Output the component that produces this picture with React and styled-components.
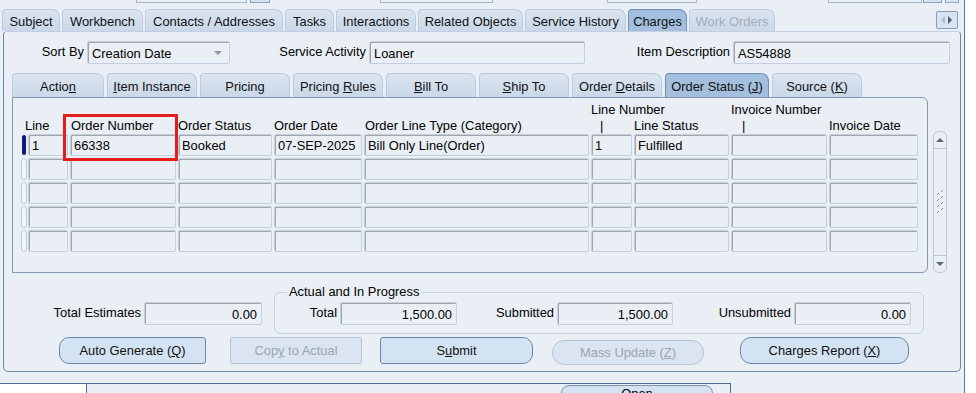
import styled, { createGlobalStyle } from "styled-components";

const GlobalStyle = createGlobalStyle`
  html, body { margin: 0; padding: 0; background: #fff; }
  body {
    font-family: "Liberation Sans", Arial, sans-serif;
    font-size: 12.9px;
    color: #000;
  }
`;

const Window = styled.div`
  width: 965px;
  height: 393px;
  box-sizing: border-box;
  background: #eaeff6;
  border-right: 1px solid #5f7899;
  overflow: hidden;
  display: flex;
  flex-direction: column;
  & > * { flex-shrink: 0; }
`;

const TopStrip = styled.div`
  height: 9px;
  display: flex;
  align-items: flex-start;
`;

const Stub = styled.div`
  margin-left: ${(p) => p.$ml}px;
  width: ${(p) => p.$w}px;
  height: 3px;
  box-sizing: border-box;
  border: 1px solid ${(p) => (p.$btn ? "#8fa3bd" : "#a9b6c6")};
  border-top: 0;
  background: ${(p) => (p.$btn ? "#d5e3f2" : "#eaeff6")};
`;

const TabBar = styled.div`
  height: 22px;
  display: flex;
  align-items: flex-end;
  gap: 2px;
  padding-left: 2px;
`;

const Tab = styled.div`
  width: ${(p) => p.$w}px;
  height: 22px;
  box-sizing: border-box;
  padding: 1px 0 0;
  display: flex;
  align-items: center;
  justify-content: center;
  white-space: pre;
  border: 1px solid ${(p) => (p.$active ? "#6f8fb6" : "#bccadc")};
  border-bottom: 0;
  border-radius: 4px 8px 0 0;
  background: ${(p) =>
    p.$active ? "#a3bfdd" : "linear-gradient(#dbe5f1, #c9d7e8)"};
  color: ${(p) => (p.$disabled ? "#a3acb8" : "#111")};
`;

const NavButton = styled.div`
  margin-left: auto;
  margin-right: 6px;
  align-self: center;
  width: 22px;
  height: 18px;
  box-sizing: border-box;
  border: 1px solid #8a9cb4;
  border-radius: 2px;
  background: #d5e3f2;
  display: flex;
  align-items: center;
  justify-content: center;
`;

const Panel = styled.div`
  margin-left: 3px;
  width: 958px;
  height: 341px;
  box-sizing: border-box;
  border: 1px solid #6e86a7;
  border-top-color: #c2cfe1;
  border-radius: 4px 4px 5px 5px;
  display: flex;
  flex-direction: column;
`;

const FieldRow = styled.div`
  margin-top: 9px;
  display: flex;
  align-items: center;
`;

const Field = styled.div`
  display: flex;
  align-items: center;
`;

const Label = styled.div`
  width: ${(p) => p.$w}px;
  margin-right: 3px;
  text-align: right;
  white-space: nowrap;
  padding-bottom: 3px;
`;

const Input = styled.div`
  width: ${(p) => p.$w}px;
  height: 23px;
  box-sizing: border-box;
  border: 1px solid #c1cfe2;
  box-shadow: inset 1px 1px 0 #a3a3a3;
  border-radius: 2px;
  background: #eaeff6;
  padding: 1px 4px 0 4px;
  display: flex;
  align-items: center;
  justify-content: ${(p) => (p.$right ? "flex-end" : "space-between")};
  white-space: pre;
`;

const DropArrow = styled.span`
  width: 0;
  height: 0;
  margin-right: 3px;
  border-left: 4px solid transparent;
  border-right: 4px solid transparent;
  border-top: 4px solid #8c96a3;
`;

const SubTabBar = styled.div`
  margin: 9px 0 0 8px;
  height: 24px;
  display: flex;
  gap: 3px;
`;

const SubTab = styled(Tab)`
  height: 24px;
`;

const U = styled.span`
  text-decoration: underline;
  text-underline-offset: 1px;
`;

const BodyRow = styled.div`
  margin-left: 8px;
  display: flex;
  align-items: flex-end;
  gap: 5px;
`;

const InnerPanel = styled.div`
  position: relative;
  width: 916px;
  height: 176px;
  box-sizing: border-box;
  border: 1px solid #8397b3;
  border-radius: 0 6px 6px 0;
  padding: 3px 0 0 8px;
`;

const cols = "7px 42px 108px 96px 90px 227px 43px 97px 98px 91px";

const HeadGrid = styled.div`
  display: grid;
  grid-template-columns: ${cols};
  grid-auto-rows: 16px;
  line-height: 16px;
  margin-bottom: 1px;
`;

const HeadCell = styled.div`
  grid-column: ${(p) => p.$col};
  grid-row: ${(p) => p.$row};
  padding-left: ${(p) => p.$pl || 0}px;
  padding-top: 1px;
  white-space: nowrap;
`;

const Row = styled.div`
  display: grid;
  grid-template-columns: ${cols};
  height: 22px;
  margin-bottom: 2px;
`;

const Cell = styled.div`
  height: 22px;
  margin-right: 2px;
  box-sizing: border-box;
  border: 1px solid #c1cfe2;
  box-shadow: inset 1px 1px 0 #a5a5a5;
  border-radius: 2px;
  padding: 1px 0 0 3px;
  display: flex;
  align-items: center;
  white-space: pre;
  overflow: hidden;
`;

const Indicator = styled.div`
  width: 6px;
  height: 22px;
  box-sizing: border-box;
  border: 1px solid ${(p) => (p.$current ? "#eaeff6" : "#bccbe0")};
  border-radius: 3px;
  background: ${(p) => (p.$current ? "#0b1a7c" : "#f1f5fa")};
`;

const Highlight = styled.div`
  position: absolute;
  left: 50px;
  top: 16px;
  width: 115px;
  height: 47px;
  box-sizing: border-box;
  border: 3px solid #e31c1c;
`;

const Scrollbar = styled.div`
  width: 14px;
  height: 142px;
  box-sizing: border-box;
  border: 1px solid #b7c6da;
  border-radius: 6px;
  display: flex;
  flex-direction: column;
`;

const ScrollArrow = styled.div`
  height: 16px;
  display: flex;
  align-items: center;
  justify-content: center;
  ${(p) => (p.$down ? "border-top" : "border-bottom")}: 1px solid #b7c6da;
`;

const Tri = styled.span`
  width: 0;
  height: 0;
  border-left: 4px solid transparent;
  border-right: 4px solid transparent;
  ${(p) => (p.$down ? "border-top" : "border-bottom")}: 4px solid #5d6776;
`;

const Track = styled.div`
  flex: 1;
  display: flex;
  align-items: center;
  justify-content: center;
`;

const TotalsRow = styled.div`
  margin-top: 19px;
  display: flex;
  align-items: flex-start;
`;

const Estimate = styled(Field)`
  margin-top: 10px;
`;

const Group = styled.div`
  position: relative;
  margin-left: 12px;
  width: 650px;
  height: 42px;
  box-sizing: border-box;
  border: 1px solid #c2d1e4;
  border-radius: 6px;
  padding-top: 9px;
  display: flex;
  align-items: flex-start;
`;

const Legend = styled.div`
  position: absolute;
  top: -8px;
  left: 12px;
  padding: 0 2px;
  background: #eaeff6;
  line-height: 14px;
`;

const ButtonRow = styled.div`
  margin-top: 3px;
  padding-left: 55px;
  display: flex;
  align-items: flex-start;
`;

const Button = styled.div`
  margin-left: ${(p) => p.$ml || 0}px;
  margin-top: ${(p) => p.$mt || 0}px;
  width: ${(p) => p.$w}px;
  height: ${(p) => p.$h || 27}px;
  box-sizing: border-box;
  border: 1px solid ${(p) => (p.$disabled ? "#b5c4d7" : "#6d87a9")};
  border-radius: ${(p) => p.$r};
  background: ${(p) => (p.$disabled ? "#dae5f1" : "#d4e3f3")};
  color: ${(p) => (p.$disabled ? "#99a4b2" : "#111")};
  display: flex;
  align-items: center;
  justify-content: center;
  white-space: pre;
`;

const Footer = styled.div`
  margin-top: 11px;
  width: 731px;
  height: 30px;
  display: flex;
  border-top: 1px solid #4d6a90;
`;

const WhiteBox = styled.div`
  width: 86px;
  background: #fff;
  border-right: 1px solid #4d6a90;
`;

const FooterArea = styled.div`
  flex: 1;
  border-right: 1px solid #4d6a90;
  display: flex;
  justify-content: flex-end;
  padding-right: 17px;
  padding-top: 1px;
`;

const OpenButton = styled.div`
  width: 152px;
  height: 24px;
  box-sizing: border-box;
  border: 1px solid #7d93b0;
  border-radius: 8px 8px 0 0;
  background: #d4e3f3;
  text-align: center;
  line-height: 14px;
  padding-top: 1px;
`;

const topTabs = [
  { w: 58, label: "Subject" },
  { w: 81, label: "Workbench" },
  { w: 138, label: "Contacts / Addresses" },
  { w: 49, label: "Tasks" },
  { w: 80, label: "Interactions" },
  { w: 105, label: "Related Objects" },
  { w: 101, label: "Service History" },
  { w: 59, label: "Charges", active: true },
  { w: 86, label: "Work Orders", disabled: true },
];

const subTabs = [
  { w: 92, label: <>Actio<U>n</U></> },
  { w: 90, label: <><U>I</U>tem Instance</> },
  { w: 90, label: "Pricing" },
  { w: 90, label: <>Pricing <U>R</U>ules</> },
  { w: 90, label: <><U>B</U>ill To</> },
  { w: 90, label: <><U>S</U>hip To</> },
  { w: 90, label: <>Order <U>D</U>etails</> },
  { w: 104, label: <>Order Status (<U>J</U>)</>, active: true },
  { w: 90, label: <>Source (<U>K</U>)</> },
];

const rows = [
  ["1", "66338", "Booked", "07-SEP-2025", "Bill Only Line(Order)", "1", "Fulfilled", "", ""],
  ["", "", "", "", "", "", "", "", ""],
  ["", "", "", "", "", "", "", "", ""],
  ["", "", "", "", "", "", "", "", ""],
  ["", "", "", "", "", "", "", "", ""],
];

const Grip = () => (
  <svg width="8" height="26" viewBox="0 0 8 26">
    {[0, 1, 2, 3].map((i) => (
      <g key={i} stroke="#7f8a99" strokeWidth="1">
        <line x1="1" y1={6 + i * 6} x2="3" y2={4 + i * 6} />
        <line x1="5" y1={3 + i * 6} x2="7" y2={1 + i * 6} />
      </g>
    ))}
  </svg>
);

const App = () => {
  return (
    <>
      <GlobalStyle />
      <Window>
        <TopStrip>
          <Stub $ml={136} $w={111} />
          <Stub $ml={3} $w={20} $btn />
          <Stub $ml={110} $w={113} />
          <Stub $ml={114} $w={90} />
          <Stub $ml={131} $w={94} />
          <Stub $ml={1} $w={19} $btn />
          <Stub $ml={3} $w={14} $btn />
        </TopStrip>

        <TabBar>
          {topTabs.map((t) => (
            <Tab key={t.label} $w={t.w} $active={t.active} $disabled={t.disabled}>
              {t.label}
            </Tab>
          ))}
          <NavButton>
            <svg width="12" height="8" viewBox="0 0 12 8">
              <polygon points="4,0 4,8 0,4" fill="#b3bcc8" />
              <polygon points="7,0 7,8 11,4" fill="#4f5a69" />
            </svg>
          </NavButton>
        </TabBar>

        <Panel>
          <FieldRow>
            <Field>
              <Label $w={80}>Sort By</Label>
              <Input $w={143}>
                <span>Creation Date</span>
                <DropArrow />
              </Input>
            </Field>
            <Field>
              <Label $w={136}>Service Activity</Label>
              <Input $w={216}>Loaner</Input>
            </Field>
            <Field>
              <Label $w={145}>Item Description</Label>
              <Input $w={217}>AS54888</Input>
            </Field>
          </FieldRow>

          <SubTabBar>
            {subTabs.map((t, i) => (
              <SubTab key={i} $w={t.w} $active={t.active}>
                <span>{t.label}</span>
              </SubTab>
            ))}
          </SubTabBar>

          <BodyRow>
            <InnerPanel>
              <HeadGrid>
                <HeadCell $col="7" $row="1">Line Number</HeadCell>
                <HeadCell $col="9" $row="1">Invoice Number</HeadCell>
                <HeadCell $col="1 / 3" $row="2" $pl={4}>Line</HeadCell>
                <HeadCell $col="3" $row="2" $pl={1}>Order Number</HeadCell>
                <HeadCell $col="4" $row="2">Order Status</HeadCell>
                <HeadCell $col="5" $row="2">Order Date</HeadCell>
                <HeadCell $col="6" $row="2" $pl={1}>Order Line Type (Category)</HeadCell>
                <HeadCell $col="7" $row="2" $pl={9}>|</HeadCell>
                <HeadCell $col="8" $row="2">Line Status</HeadCell>
                <HeadCell $col="9" $row="2" $pl={11}>|</HeadCell>
                <HeadCell $col="10" $row="2">Invoice Date</HeadCell>
              </HeadGrid>
              {rows.map((r, i) => (
                <Row key={i}>
                  <Indicator $current={i === 0} />
                  {r.map((v, j) => (
                    <Cell key={j}>{v}</Cell>
                  ))}
                </Row>
              ))}
              <Highlight />
            </InnerPanel>
            <Scrollbar>
              <ScrollArrow>
                <Tri />
              </ScrollArrow>
              <Track>
                <Grip />
              </Track>
              <ScrollArrow $down>
                <Tri $down />
              </ScrollArrow>
            </Scrollbar>
          </BodyRow>

          <TotalsRow>
            <Estimate>
              <Label $w={137}>Total Estimates</Label>
              <Input $w={118} $right>0.00</Input>
            </Estimate>
            <Group>
              <Legend>Actual and In Progress</Legend>
              <Field>
                <Label $w={62}>Total</Label>
                <Input $w={117} $right>1,500.00</Input>
              </Field>
              <Field>
                <Label $w={97}>Submitted</Label>
                <Input $w={116} $right>1,500.00</Input>
              </Field>
              <Field>
                <Label $w={118}>Unsubmitted</Label>
                <Input $w={117} $right>0.00</Input>
              </Field>
            </Group>
          </TotalsRow>

          <ButtonRow>
            <Button $w={147} $r="10px 3px 3px 10px">
              <span>Auto Generate (<U>Q</U>)</span>
            </Button>
            <Button $ml={24} $w={132} $r="2px" $disabled>
              <span>Cop<U>y</U> to Actual</span>
            </Button>
            <Button $ml={18} $w={153} $r="3px 10px 10px 3px">
              <span>S<U>u</U>bmit</span>
            </Button>
            <Button $ml={19} $mt={3} $h={25} $w={152} $r="12px" $disabled>
              <span>Mass Update (<U>Z</U>)</span>
            </Button>
            <Button $ml={36} $w={169} $r="11px">
              <span>Charges Report (<U>X</U>)</span>
            </Button>
          </ButtonRow>
        </Panel>

        <Footer>
          <WhiteBox />
          <FooterArea>
            <OpenButton>Open</OpenButton>
          </FooterArea>
        </Footer>
      </Window>
    </>
  );
};

export default App;
